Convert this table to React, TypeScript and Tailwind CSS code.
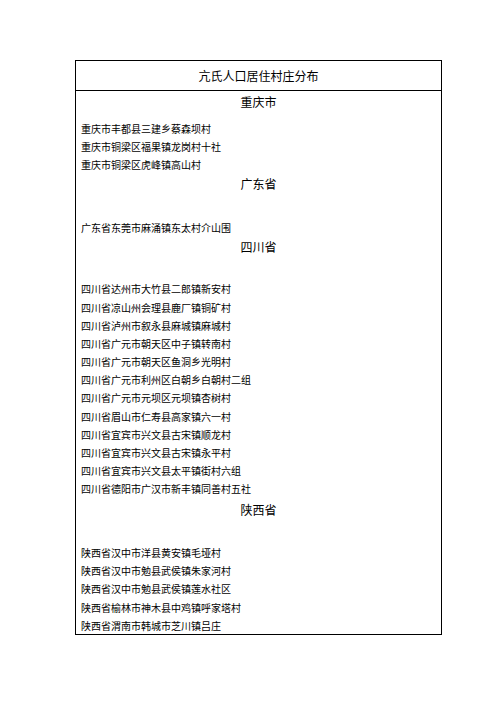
import React from "react";

const chongqing = [
  "重庆市丰都县三建乡蔡森坝村",
  "重庆市铜梁区福果镇龙岗村十社",
  "重庆市铜梁区虎峰镇高山村",
];
const guangdong = ["广东省东莞市麻涌镇东太村介山围"];
const sichuan = [
  "四川省达州市大竹县二郎镇新安村",
  "四川省凉山州会理县鹿厂镇铜矿村",
  "四川省泸州市叙永县麻城镇麻城村",
  "四川省广元市朝天区中子镇转南村",
  "四川省广元市朝天区鱼洞乡光明村",
  "四川省广元市利州区白朝乡白朝村二组",
  "四川省广元市元坝区元坝镇杏树村",
  "四川省眉山市仁寿县高家镇六一村",
  "四川省宜宾市兴文县古宋镇顺龙村",
  "四川省宜宾市兴文县古宋镇永平村",
  "四川省宜宾市兴文县太平镇街村六组",
  "四川省德阳市广汉市新丰镇同善村五社",
];
const shaanxi = [
  "陕西省汉中市洋县黄安镇毛垭村",
  "陕西省汉中市勉县武侯镇朱家河村",
  "陕西省汉中市勉县武侯镇莲水社区",
  "陕西省榆林市神木县中鸡镇呼家塔村",
  "陕西省渭南市韩城市芝川镇吕庄",
];

function Heading({ children, className = "" }: { children: React.ReactNode; className?: string }) {
  return (
    <div className={"h-[20px] flex items-center justify-center text-[12px] text-black " + className}>
      {children}
    </div>
  );
}

function Items({ items, className = "" }: { items: string[]; className?: string }) {
  return (
    <div className={"flex flex-col " + className}>
      {items.map((t) => (
        <div key={t} className="h-[18.2px] flex items-center pl-[5px] text-[10px] text-black whitespace-nowrap">
          {t}
        </div>
      ))}
    </div>
  );
}

export default function App() {
  return (
    <div
      className="w-[496px] h-[702px] bg-white pt-[60px] pl-[75px]"
      style={{ fontFamily: '"Noto Sans CJK SC", "Noto Sans", sans-serif' }}
    >
      <div className="w-[367px] border border-black">
        <div className="h-[30px] border-b border-black flex items-center justify-center text-[12px] text-black">
          亢氏人口居住村庄分布
        </div>
        <div className="flex flex-col pt-[1px]">
          <Heading>重庆市</Heading>
          <Items items={chongqing} className="mt-[7px]" />
          <Heading>广东省</Heading>
          <Items items={guangdong} className="mt-[25px]" />
          <Heading>四川省</Heading>
          <Items items={sichuan} className="mt-[23px]" />
          <Heading className="mt-[2px]">陕西省</Heading>
          <Items items={shaanxi} className="mt-[23.5px]" />
        </div>
      </div>
    </div>
  );
}
